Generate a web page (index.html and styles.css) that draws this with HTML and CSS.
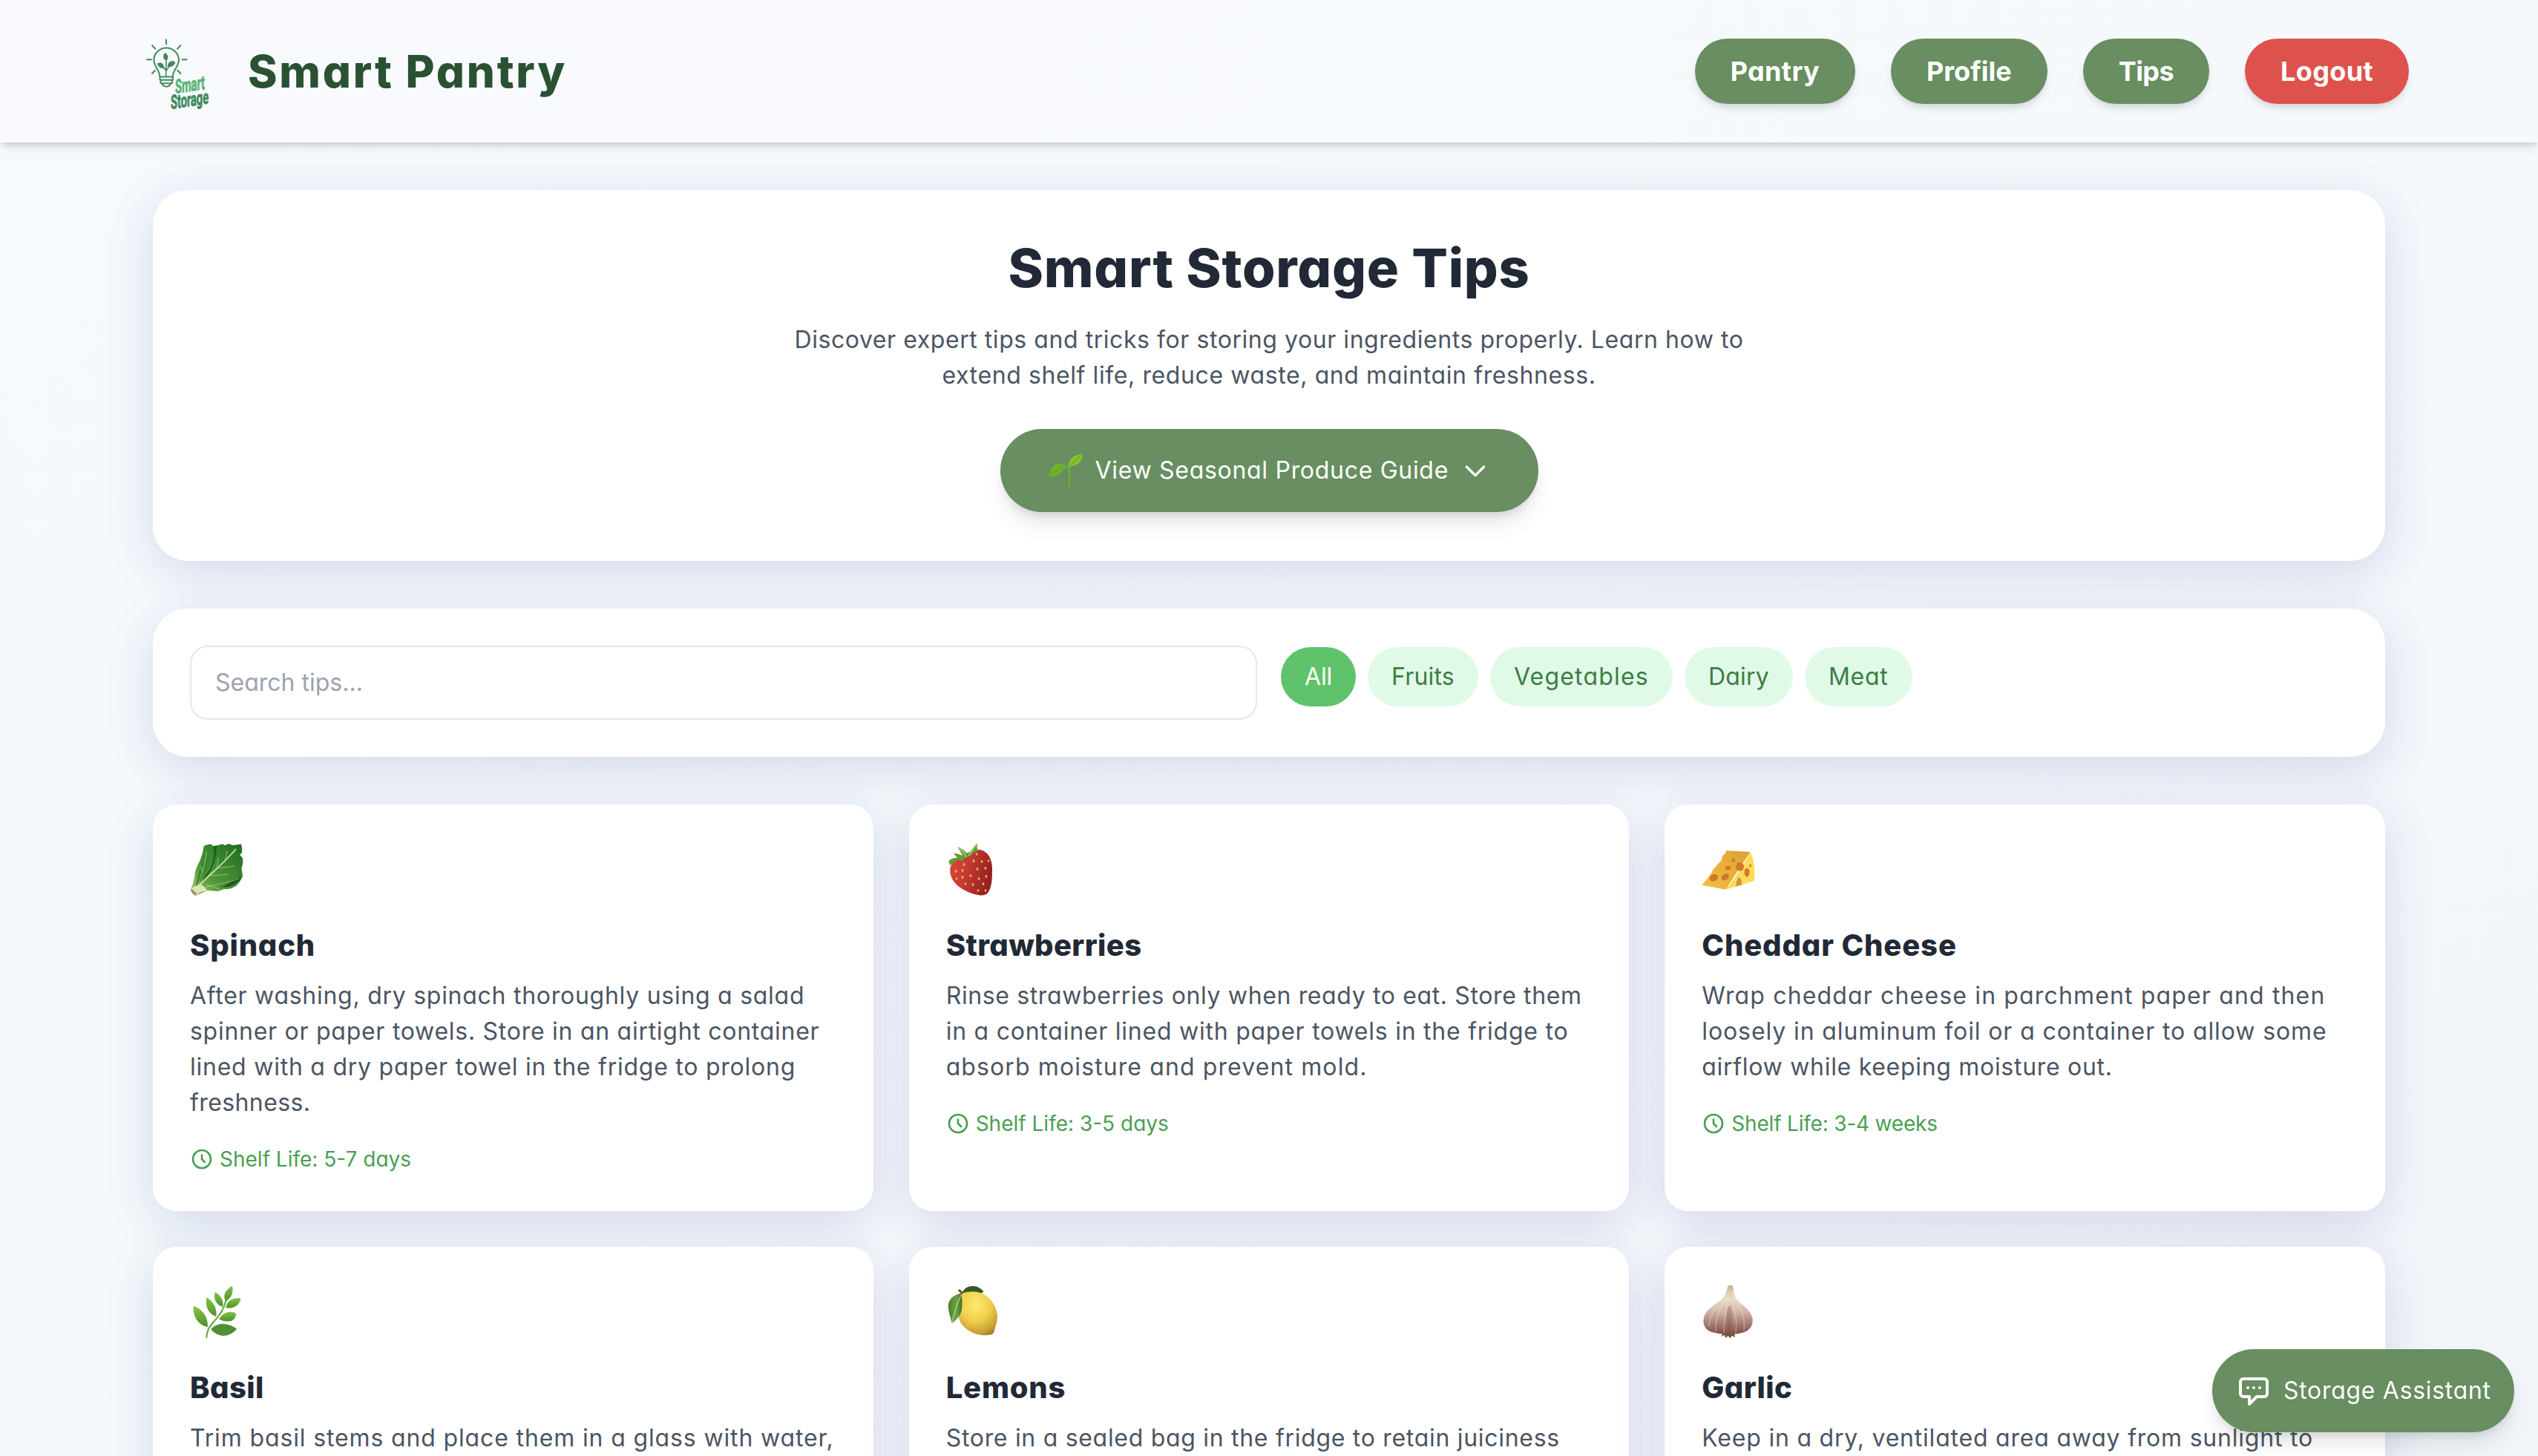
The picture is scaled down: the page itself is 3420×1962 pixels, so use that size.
FILE: index.html
```html
<!DOCTYPE html>
<html lang="en">
<head>
<meta charset="utf-8">
<title>Smart Pantry – Storage Tips</title>
<link rel="stylesheet" href="styles.css">
</head>
<body>
<header class="topbar">
  <div class="brand">
    <svg class="brand-logo" viewBox="0 0 86 98" fill="none" stroke="#3f8a5e" stroke-width="2" stroke-linecap="round" stroke-linejoin="round">
      <path d="M27 1.5v6M1 28.3h6M48.5 28.3h6M8 9.3l4.2 4.4M46.3 9.3l-4.2 4.4M8 47l4-4.2M46.3 47l-4-4.2"/>
      <path d="M18.3 50.7C18 42 10.3 38 10.3 28A16.9 16.9 0 0 1 44 28C44 38 36.200 42 35.900 50.700"/>
      <path d="M18.500 51.500h17.400v4.300h-17.400zM19.500 55.800h15.400v4.500h-15.400zM21.500 60.500c1 3.500 3 4.200 5.700 4.200s4.700-.7 5.700-4.200"/>
      <path d="M26.800 51C26.300 45 26.600 40 27 30M27 43C24.500 40 22 38 19 36.500M27.500 43C29 39 32 36.500 35.500 35" stroke-width="1.600"/>
      <path d="M25.500 19C29.500 21.500 31 26 27.500 29.500C22.500 28.500 21.500 23 25.500 19ZM14.800 33.500C19.500 31 24 33.500 24.300 40C19.500 40.500 16 38.500 14.800 33.500ZM39.300 32C36 28.500 29.500 30 28.500 37.500C33.500 39 38 37 39.300 32Z" fill="#3f8a5e" stroke="none"/>
      <g font-family="Roboto, sans-serif" font-weight="700" stroke-width=".9">
        <text transform="translate(39 74) skewY(-8.500)" textLength="40" lengthAdjust="spacingAndGlyphs" font-size="26" fill="#5bb478" stroke="#5bb478">Smart</text>
        <text transform="translate(33 95) skewY(-8.500)" textLength="51" lengthAdjust="spacingAndGlyphs" font-size="26" fill="#3f8a5e">Storage</text>
      </g>
    </svg>
    <span class="brand-name">Smart Pantry</span>
  </div>
  <nav class="nav">
    <a class="nav-btn sp-30">Pantry</a>
    <a class="nav-btn">Profile</a>
    <a class="nav-btn sp-n70">Tips</a>
    <a class="nav-btn nav-btn-danger sp-30">Logout</a>
  </nav>
</header>

<main class="page">
  <section class="panel hero">
    <h1 class="hero-title">Smart Storage Tips</h1>
    <p class="hero-text"><span class="sp-55">Discover expert tips and tricks for storing your ingredients properly. Learn how to</span><br><span class="sp-60">extend shelf life, reduce waste, and maintain freshness.</span></p>
    <button class="guide-btn">
      <svg class="guide-emoji" viewBox="0 0 48 48">
        <path d="M27.800 20C29.500 28 29.800 37 28.800 46" fill="none" stroke="#6fae2c" stroke-width="2.400" stroke-linecap="round"/>
        <path d="M27.400 19.500C27.500 9 34 2 47 2C47.500 11 40 17.500 27.400 19.500Z" fill="#82c233"/>
        <path d="M28 21C23 15 14.500 13 9 17C3.500 21 3 27 1 31.700C11 34.500 20 27 21 21C23.500 19.800 26 20 28 21Z" fill="#70b32b"/>
        <path d="M29 18C34 13 39 8 45 3.500M3 30C9 26 14 22 20 19" fill="none" stroke="#559a22" stroke-width="1"/>
      </svg>
      <span class="guide-label sp-70">View Seasonal Produce Guide</span>
      <svg class="guide-chevron" viewBox="0 0 24 24"><path d="M19 9l-7 7-7-7"/></svg>
    </button>
  </section>

  <section class="panel filters">
    <div class="search">Search tips...</div>
    <div class="chips">
      <span class="chip chip-active sp-n20">All</span>
      <span class="chip sp-20">Fruits</span>
      <span class="chip sp-120">Vegetables</span>
      <span class="chip sp-20">Dairy</span>
      <span class="chip sp-75">Meat</span>
    </div>
  </section>

  <section class="grid">
    <article class="card">
      <svg class="emoji" viewBox="0 0 80 80">
        <defs><linearGradient id="leafA" x1="0" y1="1" x2="1" y2="0"><stop offset="0" stop-color="#a9cf6c"/><stop offset=".35" stop-color="#4f9a3a"/><stop offset="1" stop-color="#1f6a22"/></linearGradient></defs>
        <path d="M7.500 73C3 70 1 67 1 63.500C5 57 6 48 7.500 39C11 30 16 22 18 10Q18 4 24 4.500Q28 2 31 6L38 5Q44 2 47 5L52 3L58 5L69 3.500Q71 9 70 15L67 18L71 22Q72 30 69.500 36L71 47Q68 54 63 59Q56 65 46 64L38 67L24 66Z" fill="url(#leafA)"/>
        <path d="M8 62C10 42 17 31 20 8C27 20 30 27 21 43C17 50 12 56 8 62Z" fill="#3d8a30"/>
        <path d="M31 7C34 18 31 32 22 44L16 54C28 44 36 26 36 6Z" fill="#1f5f1e"/>
        <path d="M70 48C58 48 52 60 40 61C50 62 60 62 70 48Z" fill="#1d5c1e"/>
        <path d="M5 68C18 50 38 38 62 10" fill="none" stroke="#cfe6aa" stroke-width="1.700"/>
        <path d="M9 65C14 48 20 36 22 14M10 66C26 58 44 58 66 50M28 46L52 44M38 36L60 33M36 38L38 22M47 28L50 12M17 40L14 34M22 58L40 64" fill="none" stroke="#b5d98a" stroke-opacity=".7" stroke-width="1"/>
        <path d="M1 63.500C6 60 12 58 15 58C20 61 22 64 24 67C18 66 12 68 7.500 73C4 71 1 68 1 63.500Z" fill="#dce6b4"/>
        <path d="M1 63.500L4 65L9 70L7.500 73C4 71 1 68 1 63.500Z" fill="#a98c63"/>
      </svg>
      <h3 class="card-title">Spinach</h3>
      <p class="card-text"><span class="sp-72">After washing, dry spinach thoroughly using a salad</span><br><span class="sp-72">spinner or paper towels. Store in an airtight container</span><br><span class="sp-75">lined with a dry paper towel in the fridge to prolong</span><br><span class="sp-40">freshness.</span></p>
      <p class="shelf"><svg class="clock" viewBox="0 0 24 24"><path d="M12 8v4l3 3m6-3a9 9 0 11-18 0 9 9 0 0118 0z"/></svg><span>Shelf Life: 5-7 days</span></p>
    </article>

    <article class="card">
      <svg class="emoji" viewBox="0 0 80 80">
        <defs><linearGradient id="berry" x1="0" y1="0" x2="1" y2=".3"><stop offset="0" stop-color="#d9483a"/><stop offset=".5" stop-color="#c43a32"/><stop offset="1" stop-color="#98221f"/></linearGradient></defs>
        <path d="M8 29C17 18 32 14 43 11C56 11 62 24 62 36C62 48 62 60 57 68C53 74 46 73 38 71C22 66 6 56 5.200 40C5 36 6 32 8 29Z" fill="url(#berry)"/>
        <path d="M3.300 26C8 22 12 22 15 22L10 16C16 16 20 18 23 20L15.400 7.400C21 9 26 13 29 17L42.200 2.600C41 7 42 11 43 13C37 13 36 18 31 20C27 21 23 23 22 27L17 24C13 26 10 28 5 32Z" fill="#5e9c34"/>
        <path d="M42 3C37 8 34 14 30 19M16 8C22 12 25 17 27 21" fill="none" stroke="#9cc76a" stroke-width="2"/>
        <g fill="#efb25c"><ellipse cx="24" cy="31" rx="1.400" ry="2"/><ellipse cx="37" cy="26" rx="1.400" ry="2"/><ellipse cx="48" cy="27" rx="1.400" ry="2"/><ellipse cx="42" cy="37" rx="1.400" ry="2"/><ellipse cx="53" cy="36" rx="1.400" ry="2"/><ellipse cx="33" cy="46" rx="1.400" ry="2"/><ellipse cx="44" cy="50" rx="1.400" ry="2"/><ellipse cx="54" cy="47" rx="1.400" ry="2"/><ellipse cx="22" cy="48" rx="1.400" ry="2"/><ellipse cx="13" cy="40" rx="1.400" ry="2"/><ellipse cx="22" cy="39" rx="1.400" ry="2"/><ellipse cx="36" cy="58" rx="1.400" ry="2"/><ellipse cx="50" cy="57" rx="1.400" ry="2"/><ellipse cx="26" cy="57" rx="1.400" ry="1.800"/><ellipse cx="43" cy="66" rx="1.400" ry="1.800"/><ellipse cx="53" cy="66" rx="1.400" ry="1.800"/><ellipse cx="41" cy="17" rx="1.300" ry="1.800"/><ellipse cx="57" cy="26" rx="1.200" ry="1.800"/><ellipse cx="14" cy="50" rx="1.200" ry="1.800"/></g>
      </svg>
      <h3 class="card-title sp-40">Strawberries</h3>
      <p class="card-text"><span class="sp-62">Rinse strawberries only when ready to eat. Store them</span><br><span class="sp-75">in a container lined with paper towels in the fridge to</span><br><span class="sp-110">absorb moisture and prevent mold.</span></p>
      <p class="shelf"><svg class="clock" viewBox="0 0 24 24"><path d="M12 8v4l3 3m6-3a9 9 0 11-18 0 9 9 0 0118 0z"/></svg><span>Shelf Life: 3-5 days</span></p>
    </article>

    <article class="card">
      <svg class="emoji" viewBox="0 0 80 80">
        <defs><linearGradient id="cheese" x1="0" y1="1" x2="1" y2="0"><stop offset="0" stop-color="#f3bf43"/><stop offset="1" stop-color="#dfa02f"/></linearGradient></defs>
        <path d="M33.600 12.200L65.500 14L32.400 64.700L.5 58.800Q9 49 14 41Q14 38 17 36Q22 30 27 25Q27 19 31 17Z" fill="url(#cheese)"/>
        <path d="M65.500 14Q70 24 71.300 36L71.300 52.500L54 58.500Q54 48 51 48Q47 50 46 60.500L32.400 64.700Q50 44 65.500 14Z" fill="#fbdc58"/>
        <path d="M46 60.500Q47 49 51 48Q54 50 54 58.500Z" fill="#dc9133"/>
        <g fill="#cf7a2a"><ellipse cx="16.400" cy="48.800" rx="6" ry="4.500" transform="rotate(-25 16.400 48.800)"/><ellipse cx="31.700" cy="47.700" rx="5.500" ry="4" transform="rotate(-30 31.700 47.700)"/><ellipse cx="35.500" cy="35.500" rx="3.800" ry="3"/><ellipse cx="51.500" cy="33.700" rx="5.500" ry="6"/><ellipse cx="42.600" cy="25.500" rx="2.200" ry="2.200"/><ellipse cx="61" cy="41.800" rx="3.500" ry="6"/><ellipse cx="65.700" cy="32.500" rx="1.300" ry="2.300"/></g>
      </svg>
      <h3 class="card-title sp-86">Cheddar Cheese</h3>
      <p class="card-text"><span class="sp-115">Wrap cheddar cheese in parchment paper and then</span><br><span class="sp-89">loosely in aluminum foil or a container to allow some</span><br><span class="sp-70">airflow while keeping moisture out.</span></p>
      <p class="shelf"><svg class="clock" viewBox="0 0 24 24"><path d="M12 8v4l3 3m6-3a9 9 0 11-18 0 9 9 0 0118 0z"/></svg><span class="sp-n20">Shelf Life: 3-4 weeks</span></p>
    </article>

    <article class="card">
      <svg class="emoji" viewBox="0 0 80 80">
        <defs><linearGradient id="herb" x1="0" y1="0" x2="0" y2="1"><stop offset="0" stop-color="#84c544"/><stop offset="1" stop-color="#4f8f2e"/></linearGradient></defs>
        <path d="M22.400 72.700C22 64 26 58 32 51C41 41 46 34 49.200 20" fill="none" stroke="#6aa83c" stroke-width="2.200"/>
        <g fill="url(#herb)">
          <path d="M4.600 30C17 34 25 45 23.700 58.300C10 55 4 44 4.600 30Z"/>
          <path d="M22.400 18.300C32 24 37 34 35.200 44.300C24 40 20 29 22.400 18.300Z"/>
          <path d="M33.900 11C42 16 46 23 44 31C35 28 31 20 33.900 11Z"/>
          <path d="M56.900 2.700C59 11 56 19 48.500 23.300C43 16 48 8 56.900 2.700Z"/>
          <path d="M68.400 19.700C67 29 58 34 48.600 32.300C49 23 58 18 68.400 19.700Z"/>
          <path d="M62 40C62 47 57 51 51 50.500C46 51 42 49 39 47.300C42 43 46 39 52 38Q59 37 62 40Z"/>
          <path d="M63.300 61C57 67 52 70 44 70C37 69 32 66 28.200 61C33 56 38 54 44 54C52 54 58 57 63.300 61Z" fill="#4f9032"/>
        </g>
      </svg>
      <h3 class="card-title sp-40">Basil</h3>
      <p class="card-text"><span class="sp-86">Trim basil stems and place them in a glass with water,</span></p>
    </article>

    <article class="card">
      <svg class="emoji" viewBox="0 0 80 80">
        <defs>
          <radialGradient id="lemon" cx=".45" cy=".3" r=".76"><stop offset="0" stop-color="#fdea74"/><stop offset=".5" stop-color="#f0cf4a"/><stop offset=".85" stop-color="#c9a035"/><stop offset="1" stop-color="#a5802b"/></radialGradient>
          <linearGradient id="leafB"><stop offset="0" stop-color="#4a8030"/><stop offset=".6" stop-color="#6fa348"/><stop offset="1" stop-color="#3c6e25"/></linearGradient>
        </defs>
        <path d="M21 13C24 5 31 2.500 37 3C43 3 47 7 50.600 10.500C44 16 30 16 21 13Z" fill="#35591f"/>
        <path d="M21 13C29 10 38 10 46 12C58 16 67 28 69 42C69.500 50 67 55 65.500 60Q65 66 62 68Q55 70 47 69C33 67 20 58 17 46C15 36 16 20 21 13Z" fill="url(#lemon)"/>
        <path d="M20.600 12.700C10 14 3 21 2.700 30C3 39 6 46 7.800 53.300C13 49 20 43 21 34C22 26 21 18 20.600 12.700Z" fill="url(#leafB)"/>
        <path d="M20 15C15 26 11 38 8 52" fill="none" stroke="#b8d491" stroke-width="1.200"/>
        <path d="M17 8L22 13" stroke="#6b4a3a" stroke-width="3"/>
      </svg>
      <h3 class="card-title">Lemons</h3>
      <p class="card-text"><span class="sp-70">Store in a sealed bag in the fridge to retain juiciness</span></p>
    </article>

    <article class="card">
      <svg class="emoji" viewBox="0 0 80 80">
        <defs><linearGradient id="garlic" x1="0" y1="0" x2="0" y2="1"><stop offset="0" stop-color="#cdb394"/><stop offset=".28" stop-color="#e6dcc3"/><stop offset=".52" stop-color="#d6b9ac"/><stop offset=".8" stop-color="#a47a6e"/><stop offset="1" stop-color="#7d5040"/></linearGradient></defs>
        <path d="M29 66L26 71L31 69L32 73L36 70L38 73.500L41 70L45 72L44 66Z" fill="#6b5844"/>
        <path d="M35.500 2.300Q39 1 42 2.300C43 8 43 14 46 19C52 28 65 33 68.500 46C70 57 64 64 54 66Q45 69 36 67Q27 69 19 66C8 65 1 58 2.700 47C5 33 20 28 29 19C33 14 34 8 35.500 2.300Z" fill="url(#garlic)"/>
        <path d="M37 10C34 26 18 34 19 64M38 10C36 28 29 40 30 66M40 10C41 28 49 40 46 66M41 10C45 26 60 34 57 64M34 14C28 28 10 34 10 58" fill="none" stroke="#f1e6da" stroke-opacity=".35" stroke-width="1.600"/>
        <path d="M36 30C32 42 33 56 37 66C42 56 43 42 39 30Z" fill="#7a4638" fill-opacity=".3"/>
      </svg>
      <h3 class="card-title sp-40">Garlic</h3>
      <p class="card-text"><span class="sp-77">Keep in a dry, ventilated area away from sunlight to</span></p>
    </article>
  </section>
</main>

<button class="assistant">
  <svg class="assistant-icon" viewBox="0 0 24 24"><path d="M8 10h.01M12 10h.01M16 10h.01M9 16H5a2 2 0 01-2-2V6a2 2 0 012-2h14a2 2 0 012 2v8a2 2 0 01-2 2h-5l-5 5v-5z"/></svg>
  <span class="sp-70">Storage Assistant</span>
</button>
</body>
</html>
```

FILE: styles.css
```css
* { box-sizing: border-box; margin: 0; padding: 0; }

html, body { height: 100%; }

body {
  overflow: hidden;
  font-family: Inter, "Open Sans", sans-serif;
  font-feature-settings: "cv11";
  font-size: 32px;
  line-height: 48px;
  color: #4b5563;
  background: linear-gradient(135deg, #f6f9fd 0%, #f4f9fc 35%, #f5f8fc 65%, #f1f5fa 100%);
}

button { border: 0; font: inherit; font-feature-settings: inherit; }

/* Header */
.topbar {
  position: relative;
  display: flex;
  align-items: center;
  justify-content: space-between;
  height: 192px;
  padding: 0 174px 0 197px;
  background: linear-gradient(90deg, #f9fafd, #f5f9fc);
  box-shadow: 0 8px 12px -2px rgba(0, 0, 0, .1), 0 4px 8px -2px rgba(0, 0, 0, .1);
}
.brand { display: flex; align-items: center; gap: 51px; }
.brand-logo { width: 86px; height: 98px; margin-top: 10px; overflow: visible; }
.brand-name {
  font-size: 60px;
  line-height: 72px;
  font-weight: 800;
  letter-spacing: 2.75px;
  color: #2a5132;
}
.nav { display: flex; gap: 48px; }
.nav-btn {
  height: 88px;
  padding: 16px 48px;
  border-radius: 44px;
  background: #688e61;
  color: #fff;
  font-size: 36px;
  line-height: 56px;
  font-weight: 700;
  box-shadow: 0 8px 12px -2px rgba(0, 0, 0, .1), 0 4px 8px -4px rgba(0, 0, 0, .1);
}
.nav-btn-danger { background: #de524d; }

/* Page */
.page {
  display: flex;
  flex-direction: column;
  gap: 64px;
  padding: 64px 206px 0;
}
.panel {
  border: 2px solid rgba(255, 255, 255, .3);
  border-radius: 48px;
  background: rgba(255, 255, 255, .95);
  box-shadow: 0 16px 64px rgba(31, 38, 135, .15);
}

.hero {
  display: flex;
  flex-direction: column;
  align-items: center;
  height: 500px;
  padding: 63px 0 0;
  text-align: center;
}
.hero-title {
  font-size: 72px;
  line-height: 80px;
  font-weight: 800;
  letter-spacing: .75px;
  color: #212936;
}
.hero-text { margin: 33px 0 48px; white-space: nowrap; }
.guide-btn {
  display: flex;
  align-items: center;
  width: 725px;
  height: 112px;
  padding: 0 64px;
  border-radius: 56px;
  background: #688e61;
  color: #fff;
  box-shadow: 0 20px 30px -6px rgba(0, 0, 0, .1), 0 8px 12px -4px rgba(0, 0, 0, .1);
}
.guide-emoji { width: 48px; height: 48px; }
.guide-label { margin: 0 16px; white-space: nowrap; }
.guide-chevron { width: 40px; height: 40px; }
.guide-chevron, .clock, .assistant-icon {
  flex: none;
  fill: none;
  stroke: currentColor;
  stroke-width: 2;
  stroke-linecap: round;
  stroke-linejoin: round;
}

.filters { display: flex; gap: 32px; height: 200px; padding: 48px; }
.search {
  width: 1438px;
  height: 100px;
  padding: 24px 32px;
  border: 2px solid #e5e7eb;
  border-radius: 24px;
  background: #fff;
  color: #9ca3af;
}
.chips { display: flex; gap: 16px; padding-top: 2px; }
.chip {
  height: 80px;
  padding: 16px 32px;
  border-radius: 40px;
  background: #e1fae8;
  color: #3c7d43;
}
.chip-active { background: #5fc36b; color: #fff; }

/* Tip cards */
.grid { display: grid; grid-template-columns: repeat(3, 1fr); gap: 48px; }
.card {
  min-height: 548px;
  padding: 48px;
  border: 2px solid rgba(255, 255, 255, .3);
  border-radius: 32px;
  background: rgba(255, 255, 255, .95);
  box-shadow: 0 16px 64px rgba(31, 38, 135, .15);
  white-space: nowrap;
}
.emoji { display: block; width: 80px; height: 80px; margin-bottom: 32px; overflow: visible; }
.card-title {
  font-size: 40px;
  line-height: 56px;
  font-weight: 800;
  letter-spacing: .8px;
  color: #212936;
  margin-bottom: 16px;
}
.shelf {
  display: flex;
  align-items: center;
  gap: 8px;
  margin-top: 32px;
  font-size: 28px;
  line-height: 40px;
  color: #4a9f52;
}
.clock { width: 32px; height: 32px; }

/* Floating assistant */
.assistant {
  position: fixed;
  right: 32px;
  bottom: 32px;
  display: flex;
  align-items: center;
  gap: 16px;
  height: 112px;
  width: 407px;
  padding: 0 32px;
  border-radius: 56px;
  background: #688e61;
  color: #fff;
  white-space: nowrap;
  box-shadow: 0 20px 30px -6px rgba(0, 0, 0, .1), 0 8px 12px -4px rgba(0, 0, 0, .1);
}
.assistant-icon { width: 48px; height: 48px; }

/* Letter spacing steps, in hundredths of a pixel */
.sp-n70 { letter-spacing: -.6px; }
.sp-n20 { letter-spacing: -.2px; }
.sp-20 { letter-spacing: .2px; }
.sp-30 { letter-spacing: .35px; }
.sp-40 { letter-spacing: .4px; }
.sp-55 { letter-spacing: .56px; }
.sp-60 { letter-spacing: .6px; }
.sp-62 { letter-spacing: .63px; }
.sp-70 { letter-spacing: .7px; }
.sp-72 { letter-spacing: .73px; }
.sp-75 { letter-spacing: .76px; }
.sp-77 { letter-spacing: .79px; }
.sp-86 { letter-spacing: .86px; }
.sp-89 { letter-spacing: .89px; }
.sp-110 { letter-spacing: 1.11px; }
.sp-115 { letter-spacing: 1.15px; }
.sp-120 { letter-spacing: 1.2px; }
```
